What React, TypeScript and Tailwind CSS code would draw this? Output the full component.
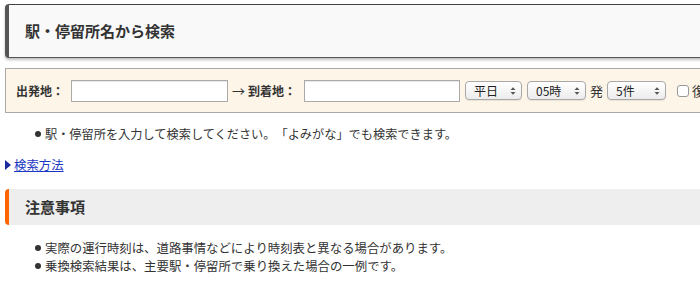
import React from "react";

const font = { fontFamily: '"Noto Sans CJK JP", "Noto Sans", sans-serif' };

function Select({ label, width }: { label: string; width: string }) {
  return (
    <div className={`relative h-[19px] ${width} shrink-0`}>
      <select
        defaultValue={label}
        className="h-full w-full appearance-none rounded-[4px] border border-[#a8a8a8] bg-gradient-to-b from-white to-[#ececec] pl-[8px] text-[12px] leading-none text-[#222] shadow-[0_1px_1px_rgba(0,0,0,0.08)] outline-none"
      >
        <option>{label}</option>
      </select>
      <svg
        className="pointer-events-none absolute right-[6px] top-1/2 -translate-y-1/2"
        width="6"
        height="9"
        viewBox="0 0 6 9"
      >
        <path d="M0.5 3.5 L3 0.8 L5.5 3.5 Z" fill="#555" />
        <path d="M0.5 5.5 L3 8.2 L5.5 5.5 Z" fill="#555" />
      </svg>
    </div>
  );
}

export default function App() {
  return (
    <div
      className="h-[300px] w-[700px] overflow-hidden bg-white text-[#333] [text-spacing-trim:space-all]"
      style={font}
    >
      <div className="w-[900px] pl-[5px] pt-[4px]">
        <div className="flex h-[54px] items-center rounded-l-[4px] border-b border-l-[4px] border-t border-b-[#555] border-l-[#555] border-t-[#444] bg-[#f9f9f9] pl-[16px] shadow-[0_2px_3px_rgba(0,0,0,0.25)]">
          <h1 className="text-[15px] font-bold text-[#333]">駅・停留所名から検索</h1>
        </div>

        <div className="mt-[10px] flex h-[45px] items-center border border-[#aaa] bg-[#fdf5e7] pl-[10px] text-[12px]">
          <span className="mr-[7px] font-bold text-[#333]">出発地：</span>
          <input className="h-[22px] w-[157px] shrink-0 border border-[#aaa] bg-white shadow-[inset_0_1px_1px_rgba(0,0,0,0.1)] outline-none" />
          <span className="ml-[4px] mr-[3px] text-[13px] text-[#333]">→</span>
          <span className="mr-[8px] font-bold text-[#333]">到着地：</span>
          <input className="h-[22px] w-[156px] shrink-0 border border-[#aaa] bg-white shadow-[inset_0_1px_1px_rgba(0,0,0,0.1)] outline-none" />
          <div className="ml-[5px] flex items-center gap-[5px]">
            <Select label="平日" width="w-[57px]" />
            <Select label="05時" width="w-[59px]" />
          </div>
          <span className="mx-[4px] text-[13px] text-[#333]">発</span>
          <Select label="5件" width="w-[59px]" />
          <input
            type="checkbox"
            className="ml-[11px] h-[12px] w-[12px] shrink-0 appearance-none rounded-[3px] border border-[#999] bg-white"
          />
          <span className="ml-[3px] text-[13px] text-[#333]">復路も検索</span>
        </div>

        <ul className="mt-[12px] pl-[30px] text-[12.2px] leading-[18px]">
          <li className="flex items-center gap-[4px]">
            <span className="h-[6px] w-[6px] rounded-full bg-[#333]" />
            駅・停留所を入力して検索してください。「よみがな」でも検索できます。
          </li>
        </ul>

        <div className="mt-[13px] flex items-center gap-[3px] text-[12.4px] leading-[18px]">
          <svg width="6" height="10" viewBox="0 0 6 10">
            <path d="M0 0 L6 5 L0 10 Z" fill="#1a2a9e" />
          </svg>
          <a href="#" className="text-[#1a37c4] underline">検索方法</a>
        </div>

        <div className="mt-[15px] flex h-[36px] items-center rounded-l-[4px] border-l-[4px] border-l-[#ff6600] bg-[#eeeeee] pl-[16px]">
          <h2 className="text-[15px] font-bold text-[#333]">注意事項</h2>
        </div>

        <ul className="mt-[14px] pl-[30px] text-[12.4px] leading-[18px]">
          <li className="flex items-center gap-[4px]">
            <span className="h-[6px] w-[6px] rounded-full bg-[#333]" />
            実際の運行時刻は、道路事情などにより時刻表と異なる場合があります。
          </li>
          <li className="flex items-center gap-[4px]">
            <span className="h-[6px] w-[6px] rounded-full bg-[#333]" />
            乗換検索結果は、主要駅・停留所で乗り換えた場合の一例です。
          </li>
        </ul>
      </div>
    </div>
  );
}
